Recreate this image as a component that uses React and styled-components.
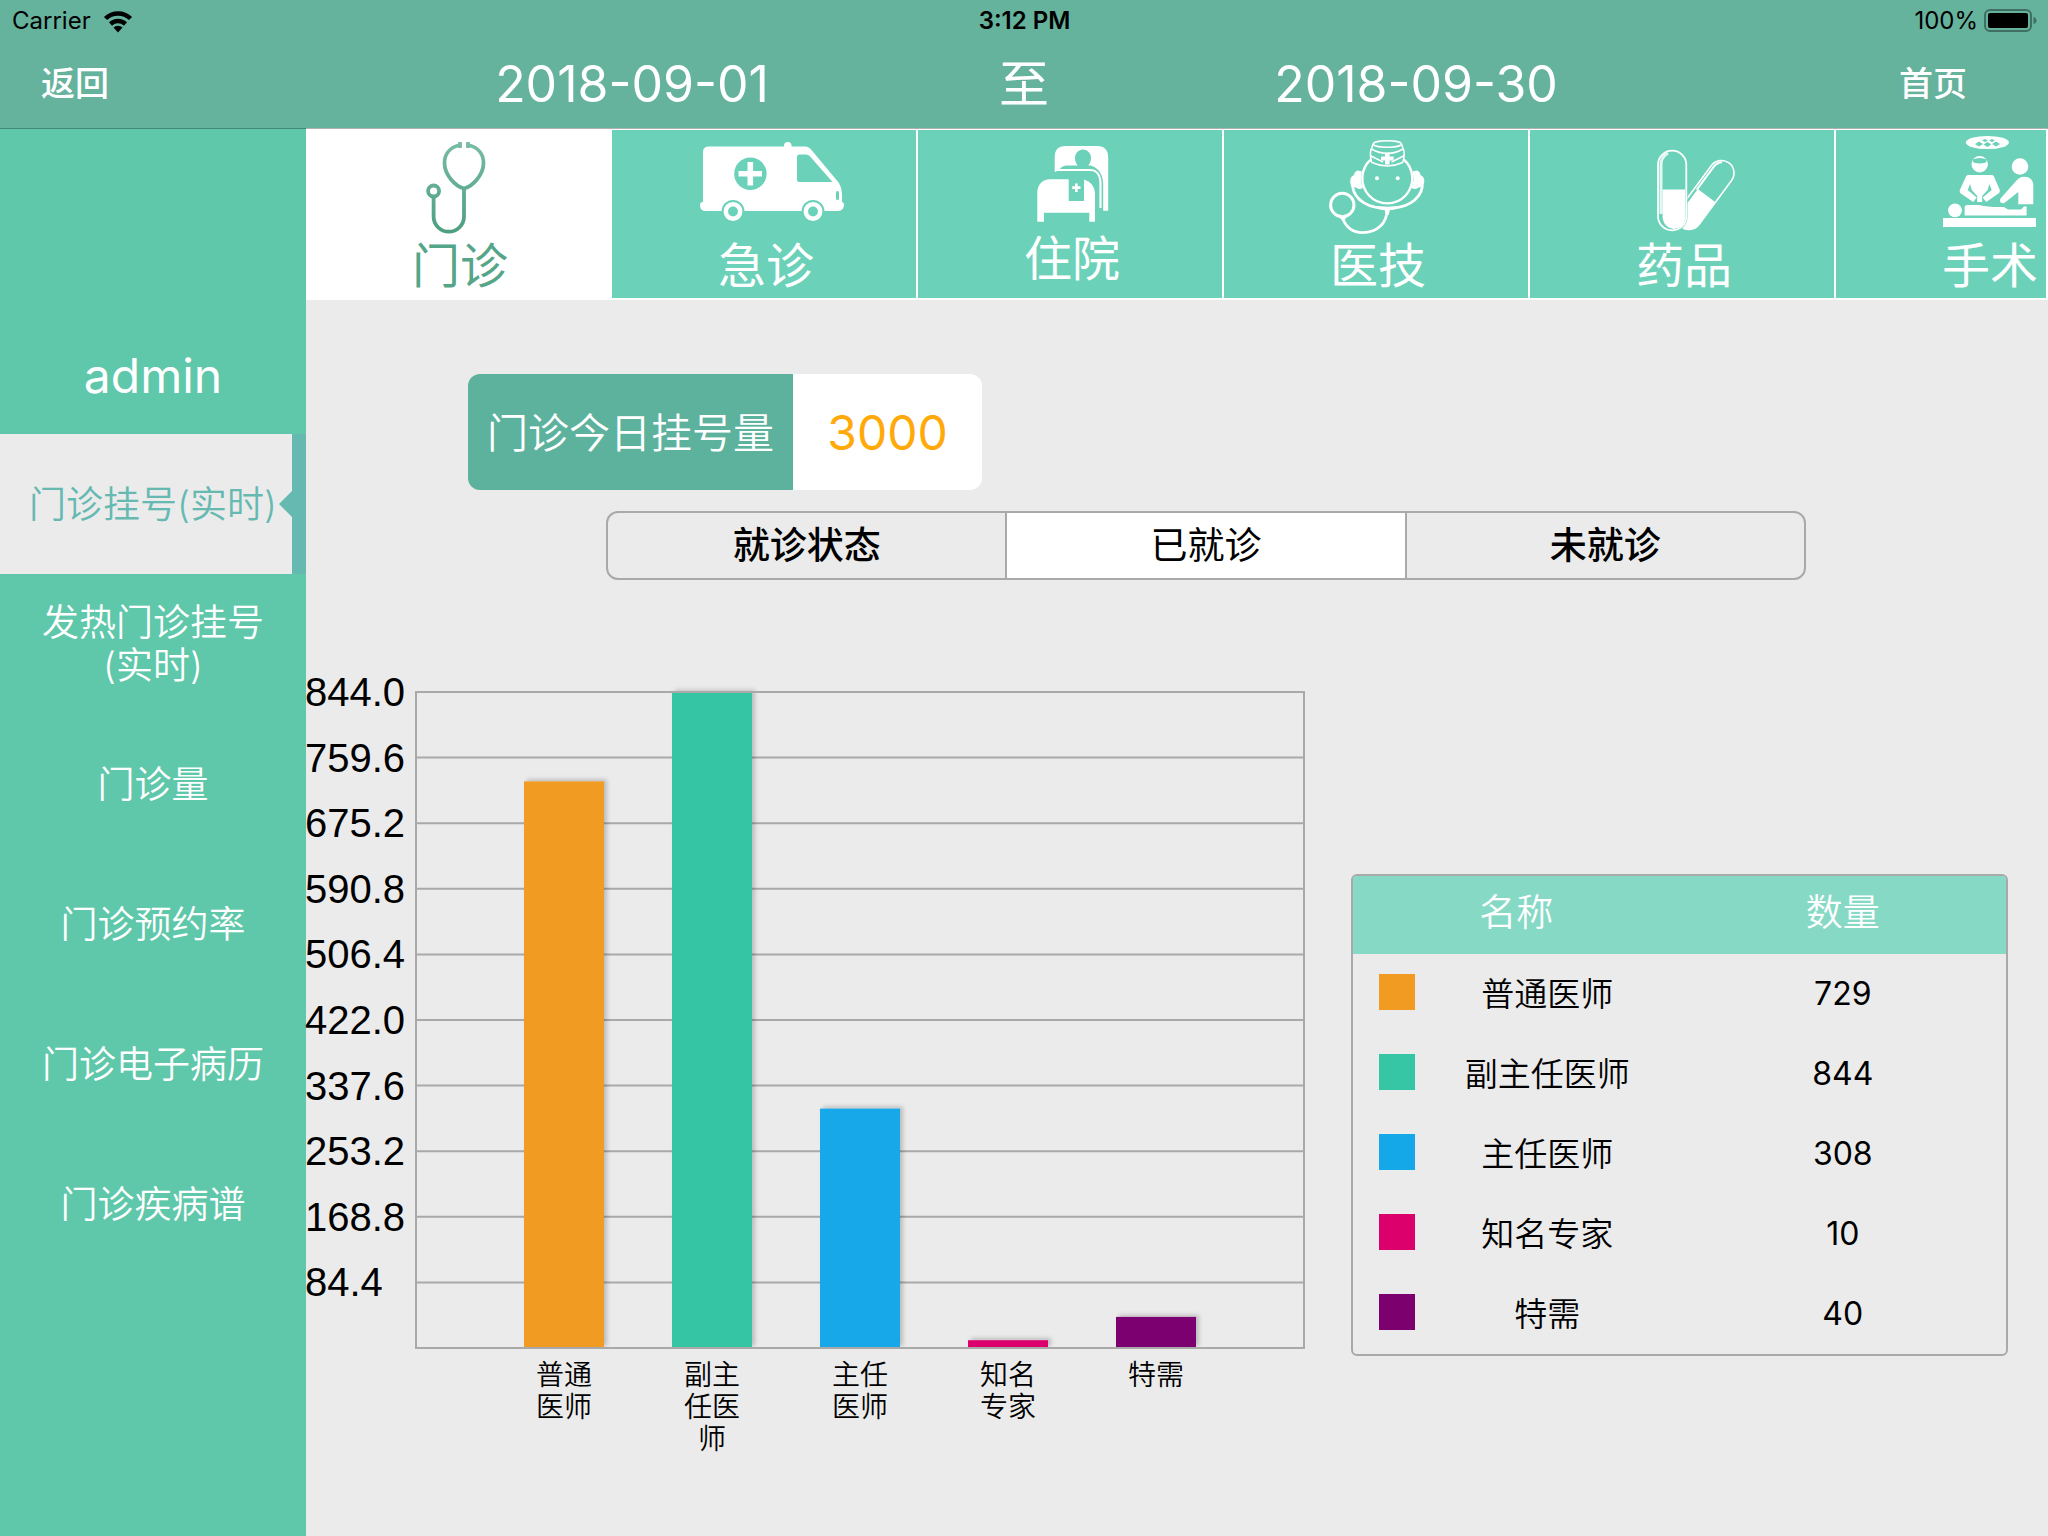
// src/App.jsx
import React, { useState } from 'react';
import styled, { createGlobalStyle } from 'styled-components';

const GlobalStyle = createGlobalStyle`
  * {
    box-sizing: border-box;
  }
  body {
    margin: 0;
    background: #ebebeb;
    font-family: Inter, "Noto Sans CJK SC", sans-serif;
    color: #000;
  }
  button {
    margin: 0;
    padding: 0;
    border: 0;
    background: none;
    color: inherit;
    font: inherit;
    cursor: pointer;
  }
`;

const Page = styled.div`
  display: flex;
  flex-direction: column;
  min-height: 100vh;
`;

const Header = styled.header`
  position: relative;
  z-index: 1;
  background: #65b29d;
  box-shadow: 0 1px 0 rgba(0, 0, 0, 0.3);
`;

const StatusBar = styled.div`
  display: grid;
  grid-template-columns: 1fr auto 1fr;
  align-items: center;
  height: 42px;
  padding: 0 11px 0 12px;
  font-size: 24px;
  line-height: 42px;
`;

const StatusSide = styled.div`
  display: flex;
  align-items: center;
  justify-content: ${(props) => (props.$end ? 'flex-end' : 'flex-start')};
  gap: ${(props) => (props.$end ? '6px' : '12px')};
`;

const Clock = styled.span`
  font-weight: 600;
`;

const NavBar = styled.div`
  display: grid;
  grid-template-columns: 1fr repeat(3, 392px) 1fr;
  align-items: center;
  height: 86px;
  padding-bottom: 2px;
  color: #fff;
`;

const NavButton = styled.button`
  justify-self: ${(props) => (props.$end ? 'end' : 'start')};
  margin: ${(props) => (props.$end ? '0 81px 0 0' : '0 0 0 41px')};
  font-size: 34px;
  font-weight: 500;
  line-height: 48px;
`;

const DateButton = styled.button`
  font-size: 50px;
  line-height: 60px;
`;

const DateSeparator = styled.span`
  font-size: 50px;
  line-height: 60px;
  text-align: center;
`;

const Body = styled.div`
  display: flex;
  flex: 1;
`;

const Sidebar = styled.aside`
  flex: none;
  width: 306px;
  background: #5fc7aa;
  color: #fff;
`;

const UserName = styled.div`
  display: flex;
  align-items: flex-end;
  justify-content: center;
  height: 306px;
  padding-bottom: 28px;
  font-size: 48px;
  line-height: 60px;
`;

const Menu = styled.nav`
  display: flex;
  flex-direction: column;
`;

const MenuItem = styled.button`
  position: relative;
  height: 140px;
  border: 0 solid transparent;
  border-width: 0 14px;
  border-left-color: ${(props) => (props.$active ? '#ebebeb' : 'transparent')};
  border-right-color: ${(props) => (props.$active ? '#65b9b1' : 'transparent')};
  background: ${(props) => (props.$active ? '#ebebeb' : 'transparent')};
  color: ${(props) => (props.$active ? '#65b9b1' : '#fff')};
  font-size: 37px;
  font-weight: 350;
  line-height: 43px;
  white-space: pre-line;

  &::after {
    content: '';
    display: ${(props) => (props.$active ? 'block' : 'none')};
    position: absolute;
    top: 57px;
    right: 0;
    border: 13px solid transparent;
    border-right-color: #65b9b1;
    border-left-width: 0;
  }
`;

const Main = styled.main`
  flex: 1;
  min-width: 0;
`;

const TabBar = styled.nav`
  display: flex;
  gap: 2px;
  overflow: hidden;
  border: solid #fff;
  border-width: 2px 2px 2px 0;
  background: #fff;
`;

const Tab = styled.button`
  display: flex;
  flex: none;
  flex-direction: column;
  align-items: center;
  width: 304px;
  height: 168px;
  background: ${(props) => (props.$active ? '#fff' : '#6bd1b9')};
  color: ${(props) => (props.$active ? '#55a588' : '#fff')};
`;

const TabLabel = styled.span`
  padding-left: 4px;
  font-size: 48px;
  line-height: 60px;
`;

const StatCard = styled.section`
  display: flex;
  width: fit-content;
  height: 116px;
  margin: 74px 0 0 162px;
  border-radius: 12px;
  overflow: hidden;
  line-height: 118px;
`;

const StatLabel = styled.div`
  width: 325px;
  background: #5db29d;
  color: #fff;
  font-size: 41px;
  font-weight: 350;
  text-align: center;
`;

const StatValue = styled.div`
  width: 189px;
  background: #fff;
  color: #ffa90a;
  font-size: 48px;
  text-align: center;
`;

const Segments = styled.div`
  display: flex;
  height: 69px;
  margin: 21px 242px 0 300px;
  border: 2px solid #a9a9a9;
  border-radius: 12px;
  overflow: hidden;
`;

const Segment = styled.button`
  flex: 1;
  background: ${(props) => (props.$active ? '#fff' : 'transparent')};
  font-size: 37px;
  font-weight: ${(props) => (props.$active ? 400 : 500)};
  line-height: 64px;

  & + & {
    border-left: 2px solid #a9a9a9;
  }
`;

const Report = styled.div`
  display: grid;
  grid-template-columns: minmax(0, 1000fr) minmax(0, 657fr);
  gap: 45px;
  align-items: start;
  margin-top: 80px;
  padding-right: 40px;
`;

const ChartSvg = styled.svg`
  display: block;
  width: 100%;
  height: auto;
  overflow: visible;
`;

const AxisText = styled.text`
  font-family: "Liberation Sans", Arial, sans-serif;
  font-size: 40px;
`;

const CategoryText = styled.text`
  font-size: 28px;
  font-weight: 350;
  text-anchor: middle;
`;

const LegendBox = styled.div`
  margin-top: 214px;
  border: 2px solid #a9a9a9;
  border-radius: 6px;
  overflow: hidden;
`;

const Legend = styled.table`
  width: 100%;
  border-collapse: collapse;
  table-layout: fixed;
`;

const SwatchCol = styled.col`
  width: 62px;
`;

const CountCol = styled.col`
  width: 50%;
`;

const LegendHead = styled.th`
  height: 78px;
  padding: 0 0 4px;
  background: #86d9c5;
  color: #fff;
  font-size: 37px;
  font-weight: 350;
  line-height: 48px;
`;

const LegendCell = styled.td`
  height: 80px;
  padding: 0;
  font-size: ${(props) => (props.$number ? '32px' : '33px')};
  font-weight: ${(props) => (props.$number ? 400 : 350)};
  line-height: 40px;
  text-align: center;
`;

const SwatchCell = styled.td`
  padding: 0 0 4px 26px;
`;

const Swatch = styled.div`
  width: 36px;
  height: 36px;
  background: ${(props) => props.$color};
`;

const TEAL = '#6bd1b9';

const WifiIcon = () => (
  <svg width="30" height="24" viewBox="0 0 30 24" fill="none" stroke="#000" strokeWidth="4.500">
    <path d="M2.500 9.500a18 18 0 0 1 25 0" />
    <path d="M7.500 15a11 11 0 0 1 15 0" />
    <path d="M15 23.500l-4.500-5a6.500 6.500 0 0 1 9 0z" fill="#000" stroke="none" />
  </svg>
);

const BatteryIcon = () => (
  <svg width="53" height="24" viewBox="0 0 53 24">
    <rect x="1" y="1" width="46" height="21" rx="5" fill="none" stroke="#3f6f62" strokeWidth="2" />
    <rect x="4" y="4" width="40" height="15" rx="2" fill="#000" />
    <path d="M49.500 8q3 1 3 3.500t-3 3.500z" fill="#3f6f62" />
  </svg>
);

const TabIcon = ({ height = 106, children }) => (
  <svg width="160" height={height} viewBox={`72 0 160 ${height}`} fill="#fff">
    {children}
  </svg>
);

const ClinicIcon = () => (
  <TabIcon>
    <defs>
      <linearGradient id="scope" gradientUnits="userSpaceOnUse" x1="0" y1="12" x2="0" y2="103">
        <stop offset="0" stopColor="#78bca6" />
        <stop offset="1" stopColor="#4c9f80" />
      </linearGradient>
    </defs>
    <g fill="none" stroke="url(#scope)" strokeWidth="3.800">
      <path d="M154.500 15C144 17 138.500 24 138.500 33c0 12 11 23.500 19.500 25.500 8.500-2 19.500-13.500 19.500-25.500 0-9-5.500-16-16-18" />
      <path d="M154 12v6M162 12v6" />
      <path d="M158 58v28.500a15.200 15.200 0 0 1-30.400 0V67" />
      <circle cx="127.600" cy="61" r="5.500" />
    </g>
  </TabIcon>
);

const AmbulanceIcon = () => (
  <TabIcon>
    <path d="M97 16.500h75v-1q0-3.500 3.700-3.500t3.800 3.500v1H193q4 0 6.500 3.500L227 53q3 5 3 11v8q2 0 2 2.500 0 6.500-6 6.500H94q-6 0-6-6 0-3 3-3V22q0-5.500 6-5.500z" />
    <g fill={TEAL}>
      <path d="M187.500 24.500h6.500q3 0 5 3L220.500 52h-33q-2.500 0-2.500-2.500V27q0-2.500 2.500-2.500z" />
      <circle cx="138.400" cy="43.700" r="16.200" />
      <rect x="224" y="61" width="3" height="9" rx="1.500" />
      <circle cx="121" cy="81.500" r="11.500" />
      <circle cx="201" cy="81.500" r="11.500" />
    </g>
    <path d="M135.500 32h5.600v9H150v5.500h-8.900v9h-5.600v-9h-9V41h9z" />
    <g fill="none" stroke="#fff" strokeWidth="4.500">
      <circle cx="121" cy="81.500" r="7.200" />
      <circle cx="201" cy="81.500" r="7.200" />
    </g>
  </TabIcon>
);

const WardIcon = () => (
  <TabIcon height={99}>
    <path d="M136.700 42V27q0-11 11-11h31.500q11 0 11 12v52.700h-5V55c0-12-6-18-13-19.500h-24q-5 .500-7 4.500z" />
    <path d="M165 19.500c4.500 0 8 3.600 8 8.500 0 3-1 5.500-2.500 7v2h-11v-2c-1.500-1.500-2.500-4-2.500-7 0-4.900 3.500-8.500 8-8.500z" fill={TEAL} />
    <path d="M138 40h34c7 0 10.500 6 10.500 14v24" fill="none" stroke="#fff" strokeWidth="2.200" />
    <path d="M119.300 91.700V62q1-12 13-12.700h18.400V71H166V49.500q10 3 11 13v29.200h-5.700v-9H126v9z" />
    <path d="M157 53.500h2.700v2.800h2.800V59h-2.800v3H157v-3h-2.800v-2.700h2.800z" />
  </TabIcon>
);

const NurseIcon = () => (
  <TabIcon>
    <g fill="none" stroke="#fff" strokeWidth="2.400">
      <path d="M147.500 29a25 25 0 1 0 31.600 0" />
      <g strokeWidth="1.500">
        <ellipse cx="163.300" cy="14" rx="14" ry="3.300" />
        <path d="M149 14l-1.500 5M177.600 14l1.500 5M147.500 19q15.800 9 31.600 0M147 19q-1.500 8 1 13.500 15.300 7 30.600 0 2.500-5.500 1-13.500M147 26l12 6M179.600 26l-12 6" />
      </g>
      <path d="M128.500 56c2 15 17 22.500 34.800 22.500S196 71 198.500 56" strokeWidth="2.800" />
      <circle cx="118.300" cy="75" r="11.700" strokeWidth="3" />
      <path d="M118.700 87c2 10 10.500 15.700 20 15.700 14 0 24.500-9 24.500-24" strokeWidth="2.800" />
    </g>
    <path d="M127 56q-2.500-9 3-11 .500-4 4-4.500l4 1q-2.500 9 1 16.500-4.500 2-6 0zM199.500 56q2.500-9-3-11-.500-4-4-4.500l-4 1q2.500 9-1 16.500 4.500 2 6 0z" />
    <path d="M145 75q18 3.500 36.500 0-8 4.500-15.500 5l-1.500 5h-2.500l-1.500-5q-8-.500-15.500-5zM115 87h7.500l-3 5z" />
    <path d="M161 22.500h4.600v4h4v4h-4v4H161v-4h-4v-4h4z" />
    <circle cx="153" cy="48.300" r="2" />
    <circle cx="173.700" cy="48.300" r="2" />
  </TabIcon>
);

const PillsIcon = () => (
  <TabIcon>
    <g transform="translate(191.500 43) rotate(36.500)">
      <rect x="-12.500" y="-12.500" width="25" height="79.700" rx="12.500" fill="none" stroke="#fff" strokeWidth="1.600" />
      <path d="M-10 28V0q0-6 4-9" fill="none" stroke="#fff" strokeWidth="2" />
      <path d="M-9.500 27h22v27.700a12.500 12.500 0 0 1-22 8z" />
    </g>
    <rect x="126.500" y="19" width="31" height="83" rx="15.500" fill={TEAL} />
    <rect x="128" y="20.700" width="28.300" height="79.600" rx="14.100" fill="none" stroke="#fff" strokeWidth="1.800" />
    <path d="M131 84V35q0-8 7-12" fill="none" stroke="#e4f7f2" strokeWidth="3" />
    <path d="M132.500 59.500h22.700V86q0 12-11.700 13-11-2-11-14z" />
  </TabIcon>
);

const SurgeryIcon = () => (
  <TabIcon>
    <g transform="translate(-2 0)">
      <ellipse cx="153.400" cy="12.500" rx="21.500" ry="6.600" />
      <path
        d="M141 14l4-2.500 4 2.500-4 2.500zM149.400 14.500l4-2.500 4 2.500-4 2.500zM158 14l4-2.500 4 2.500-4 2.500zM148 10.500l3-1.500 3 1.500-3 1.500zM155 10.500l3-1.500 3 1.500-3 1.500z"
        fill={TEAL}
      />
      <circle cx="145.700" cy="34.300" r="8.200" />
      <path d="M138.500 29.500q7.200-3 14.400 0l-1 3q-6.200 2-12.400 0z" fill={TEAL} />
      <path d="M134.500 45h23.500q1.500 0 2 1.500l6 14-.800 2.500-13 9-3.500-4.500 9-7.500-2.500-6-1.500 6-5.500 6v6h-5v-6l-5.500-6-1.500-6-2.500 6 9 7.500-3.500 4.500-13-9-.600-2.500 6.400-14q.500-1.500 2-1.500z" />
      <circle cx="186" cy="36.500" r="8.300" />
      <path d="M190 46.700q9.300 0 9.300 9v18.600h-15V62l-14 11q-4 1-4.300-2.500l.500-2 16-18q3-3.800 7.500-3.800z" />
      <circle cx="121" cy="80.300" r="6.900" />
      <path d="M133 75h12q10 2.500 25 2l4 2.500h13l3-3h2.600v9h-62V78q0-3 2.400-3z" />
      <rect x="109" y="88" width="93" height="9" />
    </g>
  </TabIcon>
);

const tabs = [
  { name: '门诊', Icon: ClinicIcon },
  { name: '急诊', Icon: AmbulanceIcon },
  { name: '住院', Icon: WardIcon },
  { name: '医技', Icon: NurseIcon },
  { name: '药品', Icon: PillsIcon },
  { name: '手术', Icon: SurgeryIcon },
];

const menu = [
  '门诊挂号(实时)',
  '发热门诊挂号\n(实时)',
  '门诊量',
  '门诊预约率',
  '门诊电子病历',
  '门诊疾病谱',
];

const segments = ['就诊状态', '已就诊', '未就诊'];

const doctors = [
  { name: '普通医师', lines: ['普通', '医师'], count: 729, color: '#f29b22' },
  { name: '副主任医师', lines: ['副主', '任医', '师'], count: 844, color: '#36c5a5' },
  { name: '主任医师', lines: ['主任', '医师'], count: 308, color: '#15a8e9' },
  { name: '知名专家', lines: ['知名', '专家'], count: 10, color: '#db006c' },
  { name: '特需', lines: ['特需'], count: 40, color: '#7d006f' },
];

// plot area inside the 1000 x 800 chart
const plot = { left: 110, top: 32, width: 888, height: 656 };
const barWidth = 80;

const BarChart = ({ data }) => {
  const max = Math.max(...data.map((d) => d.count));
  const ticks = Array.from({ length: 10 }, (_, i) => (max * (10 - i)) / 10);
  const bottom = plot.top + plot.height;
  const step = plot.width / (data.length + 1);
  const toY = (value) => bottom - (value / max) * plot.height;

  return (
    <ChartSvg viewBox="0 0 1000 800">
      <defs>
        <filter id="barShadow" x="-20%" y="-100%" width="140%" height="300%">
          <feDropShadow dx="3" dy="-2" stdDeviation="2" floodColor="#000" floodOpacity="0.2" />
        </filter>
        <clipPath id="aboveAxis">
          <rect x="0" y="0" width="1000" height={bottom} />
        </clipPath>
      </defs>
      {ticks.map((tick) => (
        <g key={tick}>
          <AxisText x="-1" y={toY(tick) + 14}>{tick.toFixed(1)}</AxisText>
          <path d={`M${plot.left} ${toY(tick)}h${plot.width}`} stroke="#a9a9a9" strokeWidth="2" />
        </g>
      ))}
      <g clipPath="url(#aboveAxis)">
        {data.map((d, i) => (
          <rect
            key={d.name}
            x={plot.left + step * (i + 1) - barWidth / 2}
            y={toY(d.count)}
            width={barWidth}
            height={bottom - toY(d.count)}
            fill={d.color}
            filter="url(#barShadow)"
          />
        ))}
      </g>
      <rect
        x={plot.left}
        y={plot.top}
        width={plot.width}
        height={plot.height}
        fill="none"
        stroke="#a9a9a9"
        strokeWidth="2"
      />
      {data.map((d, i) => (
        <CategoryText key={d.name} y={bottom + 37}>
          {d.lines.map((line, n) => (
            <tspan key={line} x={plot.left + step * (i + 1)} dy={n ? 32 : 0}>{line}</tspan>
          ))}
        </CategoryText>
      ))}
    </ChartSvg>
  );
};

const App = () => {
  const [activeTab, setActiveTab] = useState('门诊');
  const [activeMenu, setActiveMenu] = useState(menu[0]);
  const [status, setStatus] = useState('已就诊');

  return (
    <Page>
      <GlobalStyle />
      <Header>
        <StatusBar>
          <StatusSide>
            Carrier
            <WifiIcon />
          </StatusSide>
          <Clock>3:12 PM</Clock>
          <StatusSide $end>
            100%
            <BatteryIcon />
          </StatusSide>
        </StatusBar>
        <NavBar>
          <NavButton type="button">返回</NavButton>
          <DateButton type="button">2018-09-01</DateButton>
          <DateSeparator>至</DateSeparator>
          <DateButton type="button">2018-09-30</DateButton>
          <NavButton type="button" $end>首页</NavButton>
        </NavBar>
      </Header>
      <Body>
        <Sidebar>
          <UserName>admin</UserName>
          <Menu>
            {menu.map((item) => (
              <MenuItem
                key={item}
                type="button"
                $active={item === activeMenu}
                onClick={() => setActiveMenu(item)}
              >
                {item}
              </MenuItem>
            ))}
          </Menu>
        </Sidebar>
        <Main>
          <TabBar>
            {tabs.map(({ name, Icon }) => (
              <Tab
                key={name}
                type="button"
                $active={name === activeTab}
                onClick={() => setActiveTab(name)}
              >
                <Icon />
                <TabLabel>{name}</TabLabel>
              </Tab>
            ))}
          </TabBar>
          <StatCard>
            <StatLabel>门诊今日挂号量</StatLabel>
            <StatValue>3000</StatValue>
          </StatCard>
          <Segments>
            {segments.map((name) => (
              <Segment
                key={name}
                type="button"
                $active={name === status}
                onClick={() => setStatus(name)}
              >
                {name}
              </Segment>
            ))}
          </Segments>
          <Report>
            <BarChart data={doctors} />
            <LegendBox>
              <Legend>
                <colgroup>
                  <SwatchCol />
                  <col />
                  <CountCol />
                </colgroup>
                <thead>
                  <tr>
                    <LegendHead colSpan={2}>名称</LegendHead>
                    <LegendHead>数量</LegendHead>
                  </tr>
                </thead>
                <tbody>
                  {doctors.map((d) => (
                    <tr key={d.name}>
                      <SwatchCell>
                        <Swatch $color={d.color} />
                      </SwatchCell>
                      <LegendCell>{d.name}</LegendCell>
                      <LegendCell $number>{d.count}</LegendCell>
                    </tr>
                  ))}
                </tbody>
              </Legend>
            </LegendBox>
          </Report>
        </Main>
      </Body>
    </Page>
  );
};

export default App;
